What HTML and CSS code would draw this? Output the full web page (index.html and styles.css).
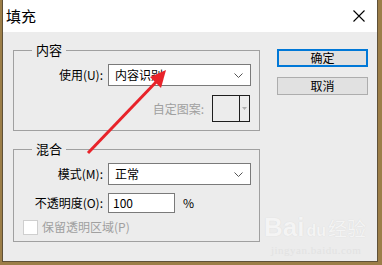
FILE: index.html
```html
<!DOCTYPE html>
<html lang="zh-CN">
<head>
    <meta charset="UTF-8">
    <title>填充</title>
    <link rel="stylesheet" href="styles.css">
</head>
<body>
    <div class="window">
        <div class="titlebar">
            <span class="title">填充</span>
            <svg class="close" width="12" height="12" viewBox="0 0 12 12">
                <path d="M0.5 0.5 L11.5 11.5 M11.5 0.5 L0.5 11.5" stroke="#000" stroke-width="1.1" fill="none"/>
            </svg>
        </div>

        <div class="main">
            <div class="left">
                <div class="group group-content">
                    <span class="legend">内容</span>
                    <div class="row">
                        <span class="label">使用(U):</span>
                        <div class="select">
                            <span>内容识别</span>
                            <svg class="chevron" width="9" height="5" viewBox="0 0 9 5"><path d="M0.5 0.5 L4.5 4.5 L8.5 0.5" stroke="#555" fill="none"/></svg>
                        </div>
                    </div>
                    <div class="row pattern-row">
                        <span class="disabled">自定图案:</span>
                        <div class="pattern">
                            <div class="swatch"></div>
                            <div class="drop"><svg width="5" height="3" viewBox="0 0 5 3"><path d="M0 0 H5 L2.5 3 Z" fill="#b0b0b0"/></svg></div>
                        </div>
                    </div>
                </div>

                <div class="group group-blend">
                    <span class="legend">混合</span>
                    <div class="row">
                        <span class="label">模式(M):</span>
                        <div class="select">
                            <span>正常</span>
                            <svg class="chevron" width="9" height="5" viewBox="0 0 9 5"><path d="M0.5 0.5 L4.5 4.5 L8.5 0.5" stroke="#555" fill="none"/></svg>
                        </div>
                    </div>
                    <div class="row row-opacity">
                        <span class="label">不透明度(O):</span>
                        <div class="input">100</div>
                        <span class="percent">%</span>
                    </div>
                    <div class="row row-check">
                        <span class="checkbox"></span>
                        <span class="disabled">保留透明区域(P)</span>
                    </div>
                </div>
            </div>

            <div class="right">
                <button class="btn btn-default">确定</button>
                <button class="btn">取消</button>
            </div>
        </div>

        <div class="watermark">
            <div class="wm-logo"><span class="wm-bai">Bai</span><span class="wm-du">du</span><span class="wm-jy">经验</span></div>
            <div class="wm-url">jingyan.baidu.com</div>
        </div>

        <svg class="arrow" width="376" height="262" viewBox="0 0 376 262">
            <line x1="87" y1="153" x2="157" y2="80" stroke="#e8232a" stroke-width="3"/>
            <polygon points="165,70 149,77 160,88" fill="#e8232a"/>
        </svg>
    </div>
</body>
</html>
```

FILE: styles.css
```css
body {
    margin: 0;
    padding: 0;
    background: #9c7e48;
    font-family: "Noto Sans CJK SC", "Liberation Sans", sans-serif;
    font-size: 12px;
    color: #000;
}
.window {
    position: relative;
    margin-left: 2px;
    width: 376px;
    height: 262px;
    box-sizing: border-box;
    border: 1px solid #5e5038;
    border-top: none;
    background: #ececec;
    overflow: hidden;
}
.titlebar {
    height: 32px;
    background: #fff;
    display: flex;
    align-items: center;
    justify-content: space-between;
    padding: 0 12px 0 3px;
}
.title {
    font-size: 15px;
    line-height: 20px;
}
.main {
    display: flex;
    padding: 18px 0 0 10px;
}
.left {
    width: 247px;
}
.right {
    margin-left: 17px;
    margin-top: -1px;
    width: 91px;
    display: flex;
    flex-direction: column;
    gap: 10px;
}
.group {
    position: relative;
    border: 1px solid #a0a0a0;
    box-sizing: border-box;
}
.group-content {
    height: 81px;
    padding: 13px 0 0 0;
}
.group-blend {
    height: 93px;
    margin-top: 18px;
    padding: 13px 0 0 0;
}
.legend {
    position: absolute;
    top: -9px;
    left: 18px;
    padding: 0 4px;
    background: #ececec;
    font-size: 13px;
    line-height: 16px;
}
.row {
    display: flex;
    align-items: center;
}
.label {
    width: 89px;
    margin-right: 5px;
    text-align: right;
    line-height: 16px;
}
.select {
    width: 143px;
    height: 22px;
    box-sizing: border-box;
    border: 1px solid #7a7a7a;
    background: #fff;
    display: flex;
    align-items: center;
    justify-content: space-between;
    padding: 0 7px 0 6px;
    line-height: 16px;
}
.pattern-row {
    margin-top: 9px;
    justify-content: flex-end;
    padding-right: 9px;
    gap: 8px;
}
.disabled {
    color: #a0a0a0;
    line-height: 16px;
}
.pattern {
    width: 38px;
    height: 27px;
    box-sizing: border-box;
    border: 1px solid #1e1e1e;
    background: #ececec;
    display: flex;
}
.swatch {
    width: 26px;
    border-right: 1px solid #1e1e1e;
}
.drop {
    flex: 1;
    display: flex;
    align-items: center;
    justify-content: center;
}
.row-opacity {
    margin-top: 8px;
}
.input {
    width: 67px;
    height: 20px;
    box-sizing: border-box;
    border: 1px solid #7a7a7a;
    background: #fff;
    padding-left: 4px;
    line-height: 18px;
}
.percent {
    margin-left: 8px;
    line-height: 16px;
}
.row-check {
    margin-top: 6px;
    padding-left: 9px;
    gap: 4px;
}
.checkbox {
    width: 15px;
    height: 15px;
    box-sizing: border-box;
    border: 1px solid #cfcfcf;
    background: #fff;
}
.btn {
    height: 18px;
    box-sizing: border-box;
    border: 1px solid #adadad;
    background: #e1e1e1;
    font-family: "Noto Sans CJK SC", sans-serif;
    font-size: 12px;
    line-height: 14px;
    padding: 0;
    color: #000;
}
.btn-default {
    border: 2px solid #0078d7;
}
.watermark {
    position: absolute;
    left: 261px;
    top: 214px;
    color: #f4f4f4;
    text-shadow: 0 0 1px #d6d6d6;
}
.wm-logo {
    display: flex;
    align-items: baseline;
    font-family: "Liberation Sans", sans-serif;
    font-weight: bold;
    line-height: 26px;
}
.wm-bai {
    font-size: 26px;
}
.wm-du {
    font-size: 16px;
    margin: 0 2px;
}
.wm-jy {
    font-family: "Noto Sans CJK SC", sans-serif;
    font-size: 19px;
    font-weight: normal;
}
.wm-url {
    font-family: "Liberation Serif", serif;
    font-size: 11px;
    line-height: 12px;
    padding-left: 7px;
    letter-spacing: 0.5px;
    color: #e2e2e2;
    text-shadow: none;
}
.arrow {
    position: absolute;
    left: -2px;
    top: 0;
    pointer-events: none;
}
```
